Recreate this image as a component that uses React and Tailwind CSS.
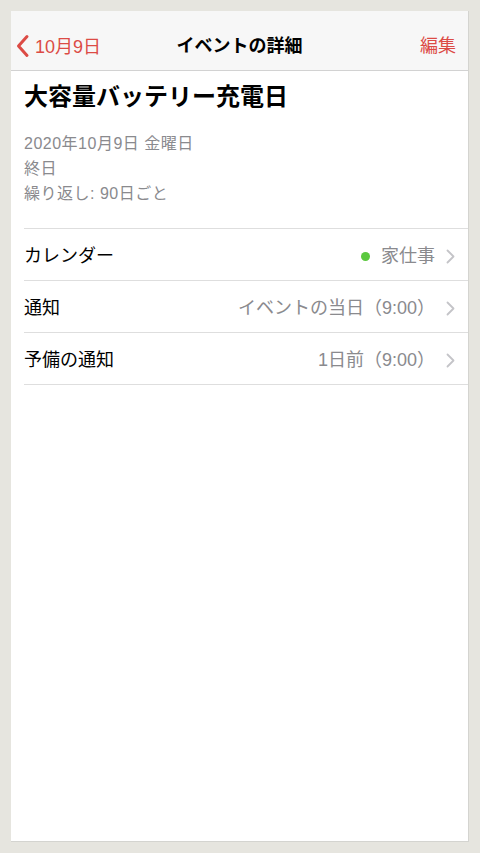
import React from 'react';

const rows = [
  { label: 'カレンダー', value: '家仕事', dot: true },
  { label: '通知', value: 'イベントの当日（9:00）' },
  { label: '予備の通知', value: '1日前（9:00）' },
];

const Chevron = () => (
  <svg width="9" height="15" viewBox="0 0 9 15" fill="none" className="ml-[11px]">
    <path d="M1.5 1.5 L7.5 7.5 L1.5 13.5" stroke="#c4c4c8" strokeWidth="1.8" strokeLinecap="round" strokeLinejoin="round" />
  </svg>
);

export default function App() {
  return (
    <div
      className="w-[480px] h-[853px] bg-[#e6e5df] pt-[11px] pl-[11px] pr-[11px] pb-[11px]"
      style={{ fontFamily: '"Liberation Sans", "Noto Sans CJK JP", sans-serif' }}
    >
      <div className="h-full bg-white border-r border-b border-[#d4d4d0] flex flex-col">
        {/* header */}
        <div className="h-[60px] bg-[#f7f7f7] border-b border-[#d2d2d2] flex items-center pt-[12px] pr-[12px] relative">
          <div className="flex items-center pl-[3px] text-[#dc4b45]">
            <svg width="18" height="24" viewBox="0 0 18 24" fill="none" className="-mt-[2px]">
              <path d="M13 2.5 L4.5 12 L13 21.5" stroke="#dc4b45" strokeWidth="3" strokeLinecap="round" strokeLinejoin="round" />
            </svg>
            <span className="text-[18px] leading-none ml-[3px]">10月9日</span>
          </div>
          <div className="absolute left-0 right-0 top-[12px] bottom-0 flex items-center justify-center pointer-events-none">
            <span className="text-[18px] font-bold text-black">イベントの詳細</span>
          </div>
          <span className="ml-auto text-[18px] text-[#dc4b45]">編集</span>
        </div>

        {/* title */}
        <div className="pl-[13px] pt-[11px]">
          <h1 className="text-[24px] leading-[30px] font-bold text-black">大容量バッテリー充電日</h1>
          <div className="mt-[19px] text-[16px] leading-[25px] tracking-[0.5px] text-[#8a8a8e]">
            <div>2020年10月9日 金曜日</div>
            <div>終日</div>
            <div>繰り返し: 90日ごと</div>
          </div>
        </div>

        {/* rows */}
        <div className="mt-[22px] ml-[13px] border-t border-[#dedede]">
          {rows.map((r) => (
            <div key={r.label} className="h-[52px] flex items-center border-b border-[#dedede] pt-[4px] pr-[13px]">
              <span className="text-[18px] text-black">{r.label}</span>
              <div className="ml-auto flex items-center">
                {r.dot && <span className="w-[9px] h-[9px] rounded-full bg-[#5bc83f] mr-[11px]" />}
                <span className="text-[18px] text-[#8a8a8e]">{r.value}</span>
                <Chevron />
              </div>
            </div>
          ))}
        </div>
      </div>
    </div>
  );
}
